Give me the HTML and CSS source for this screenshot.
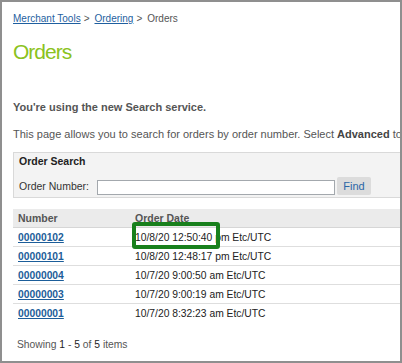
FILE: index.html
```html
<!DOCTYPE html>
<html lang="en">
<head>
  <meta charset="UTF-8">
  <meta name="viewport" content="width=device-width, initial-scale=1.0">
  <title>Orders</title>
  <link rel="stylesheet" href="styles.css">
</head>
<body>

  <div class="frame">
    <!-- Breadcrumb -->
    <div class="crumbs">
      <a href="#">Merchant Tools</a><span class="sep">&gt;</span><a href="#">Ordering</a><span class="sep">&gt;</span><span>Orders</span>
    </div>

    <h1 class="page-title">Orders</h1>

    <p class="notice">You're using the new Search service.</p>
    <p class="intro">This page allows you to search for orders by order number. Select <b>Advanced</b> to search by other criteria.</p>

    <!-- Search box -->
    <div class="search">
      <div class="search-title">Order Search</div>
      <div class="search-row">
        <label class="search-label" for="order-number">Order Number:</label>
        <input class="search-input" id="order-number" type="text">
        <button class="find-btn">Find</button>
      </div>
    </div>

    <!-- Results -->
    <table class="results">
      <thead>
        <tr>
          <th class="col-num">Number</th>
          <th>Order Date</th>
        </tr>
      </thead>
      <tbody>
        <tr>
          <td><a href="#">00000102</a></td>
          <td>10/8/20 12:50:40 pm Etc/UTC</td>
        </tr>
        <tr>
          <td><a href="#">00000101</a></td>
          <td>10/8/20 12:48:17 pm Etc/UTC</td>
        </tr>
        <tr>
          <td><a href="#">00000004</a></td>
          <td>10/7/20 9:00:50 am Etc/UTC</td>
        </tr>
        <tr>
          <td><a href="#">00000003</a></td>
          <td>10/7/20 9:00:19 am Etc/UTC</td>
        </tr>
        <tr>
          <td><a href="#">00000001</a></td>
          <td>10/7/20 8:32:23 am Etc/UTC</td>
        </tr>
      </tbody>
    </table>

    <div class="paging">Showing <b>1</b> - <b>5</b> of <b>5</b> items</div>

    <!-- Highlight drawn over the first order date -->
    <div class="highlight"></div>
  </div>

</body>
</html>
```

FILE: styles.css
```css
body {
  margin: 0;
  background-color: #ffffff;
  font-family: 'Liberation Sans', Arial, sans-serif;
  color: #555;
}

.frame {
  position: relative;
  width: 402px;
  height: 363px;
  box-sizing: border-box;
  border: 2px solid #8f8f8f;
  padding: 11px 0 0 11px;
  overflow: hidden;
}

.crumbs {
  font-size: 10px;
  line-height: 12px;
  white-space: nowrap;
  color: #555;
}

.crumbs a {
  color: #1f5f9f;
}

.crumbs .sep {
  margin: 0 5px 0 3px;
}

.page-title {
  margin: 15px 0 0;
  font-size: 21px;
  line-height: 24px;
  font-weight: normal;
  letter-spacing: -1px;
  color: #8bc220;
}

.notice {
  margin: 36px 0 0;
  font-size: 11px;
  line-height: 14px;
  font-weight: bold;
  white-space: nowrap;
}

.intro {
  margin: 13px 0 0;
  font-size: 11px;
  line-height: 14px;
  white-space: nowrap;
}

.intro b {
  color: #444;
}

.search {
  width: 420px;
  margin-top: 11px;
  padding: 1px 5px 2px;
  background-color: #f3f3f3;
  border: 1px solid #d9d9d9;
}

.search-title {
  font-size: 10.5px;
  line-height: 14px;
  font-weight: bold;
  color: #222;
}

.search-row {
  display: flex;
  align-items: center;
  height: 18px;
  margin-top: 9px;
}

.search-label {
  width: 78px;
  font-size: 10.5px;
  color: #333;
}

.search-input {
  width: 238px;
  height: 15px;
  box-sizing: border-box;
  margin: 2px 0 0;
  padding: 0 3px;
  border: 1px solid #a3a8ad;
  background-color: #ffffff;
}

.find-btn {
  width: 34px;
  height: 18px;
  margin-left: 2px;
  padding: 0;
  border: none;
  border-radius: 2px;
  background-color: #dcdcdc;
  color: #2b66a6;
  font-family: inherit;
  font-size: 11px;
}

.results {
  width: 430px;
  margin-top: 11px;
  border-collapse: collapse;
  font-size: 10.3px;
  color: #222;
}

.results th {
  height: 18px;
  padding: 0 5px;
  text-align: left;
  font-size: 10.5px;
  color: #555;
  background-color: #ebebeb;
  border-bottom: 1px solid #d6d6d6;
}

.results .col-num {
  width: 107px;
}

.results td {
  height: 18px;
  padding: 0 5px;
  border-bottom: 1px solid #dedede;
  white-space: nowrap;
}

.results tbody tr:last-child td {
  border-bottom: none;
}

.results td a {
  color: #1c5d99;
  font-weight: bold;
}

.paging {
  margin: 16px 0 0 4px;
  font-size: 10.3px;
  line-height: 14px;
}

.paging b {
  font-weight: normal;
  color: #222;
}

.highlight {
  position: absolute;
  left: 130px;
  top: 220px;
  width: 88px;
  height: 27px;
  box-sizing: border-box;
  border: 4px solid #18801c;
  border-radius: 3px;
}
```
